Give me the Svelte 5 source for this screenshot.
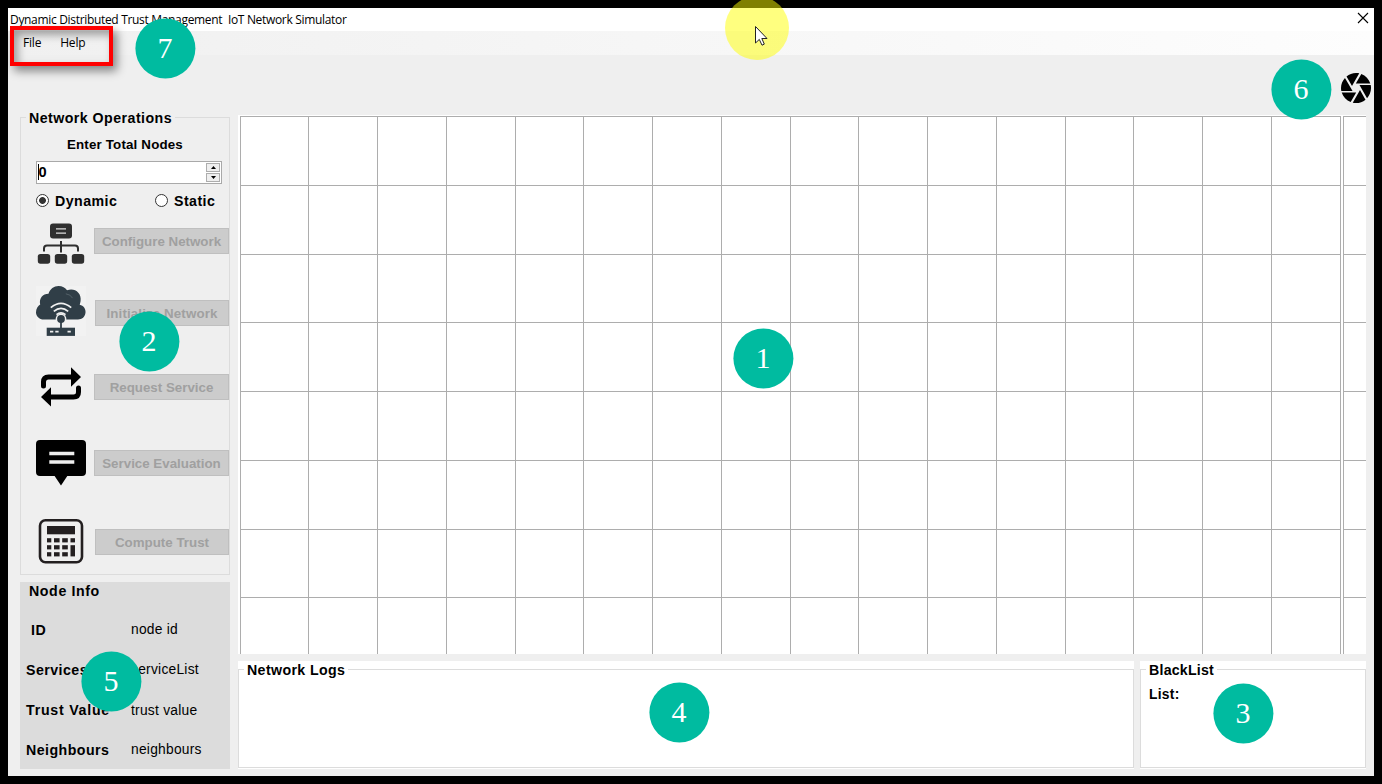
<script>
  const cols = Array.from({ length: 17 }, (_, i) => Math.floor(2 + i * 68.75));
  const rows = Array.from({ length: 8 }, (_, i) => Math.round(1 + i * 68.75));
  const operations = [
    { id: 'configure', label: 'Configure Network' },
    { id: 'initialize', label: 'Initialize Network' },
    { id: 'request', label: 'Request Service' },
    { id: 'evaluate', label: 'Service Evaluation' },
    { id: 'trust', label: 'Compute Trust' }
  ];
  const info = [
    ['ID', 'node id'],
    ['Services', 'serviceList'],
    ['Trust Value', 'trust value'],
    ['Neighbours', 'neighbours']
  ];
  const markers = [
    { n: 1, x: 763, y: 358 },
    { n: 2, x: 149, y: 341 },
    { n: 3, x: 1243, y: 713 },
    { n: 4, x: 679, y: 712 },
    { n: 5, x: 111, y: 681 },
    { n: 6, x: 1301, y: 89 },
    { n: 7, x: 165, y: 48 }
  ];
</script>

<div class="screen">
  <div class="window">
    <header class="title">
      <span>Dynamic Distributed Trust Management&nbsp; IoT Network Simulator</span>
      <svg class="close" width="12" height="12" viewBox="0 0 12 12"><path d="M1 1L11 11M11 1L1 11" stroke="#000" stroke-width="1.1" /></svg>
    </header>
    <nav class="menu"><span>File</span><span>Help</span></nav>
    <div class="tools">
      <svg width="32" height="32" viewBox="1.33 1.33 21.33 21.33">
        <path d="M9.4 10.5l4.77-8.26C13.47 2.09 12.75 2 12 2c-2.4 0-4.6.85-6.32 2.25l3.66 6.35.06-.1zM21.54 9c-.92-2.92-3.15-5.26-6-6.34L11.88 9h9.66zm.26 1h-7.49l.29.5 4.76 8.25C21 16.97 22 14.61 22 12c0-.69-.07-1.35-.2-2zM8.54 12l-3.9-6.75C3.01 7.03 2 9.39 2 12c0 .69.07 1.35.2 2h7.49l-1.15-2zm-6.08 3c.92 2.92 3.15 5.26 6 6.34L12.12 15H2.46zm11.27 0l-3.9 6.76c.7.15 1.42.24 2.17.24 2.4 0 4.6-.85 6.32-2.25l-3.66-6.35-.93 1.6z" />
      </svg>
    </div>
    <main>
      <aside>
        <fieldset class="ops">
          <legend>Network Operations</legend>
          <div class="caption">Enter Total Nodes</div>
          <div class="spinner">
            <span class="value">0</span>
            <span class="steps">
              <i><svg width="5" height="3"><path d="M0 3L2.5 0L5 3z" /></svg></i>
              <i><svg width="5" height="3"><path d="M0 0L2.5 3L5 0z" /></svg></i>
            </span>
          </div>
          <div class="radios">
            <span class="radio on"></span><span class="dyn">Dynamic</span>
            <span class="radio"></span><span class="sta">Static</span>
          </div>
          {#each operations as op}
            <div class="op {op.id}">
              <svg width="50" height="56" viewBox="0 0 50 56">
                {#if op.id === 'configure'}
                  <g fill="#2f2f2f">
                    <rect x="14" y="10.5" width="22" height="15" rx="3" />
                    <rect x="1.8" y="41" width="12.4" height="9.7" rx="2.6" />
                    <rect x="18.8" y="41" width="12.4" height="9.7" rx="2.6" />
                    <rect x="35.8" y="41" width="12.4" height="9.7" rx="2.6" />
                  </g>
                  <path d="M20 15.9h10M20 20.1h10" stroke="#ddd" stroke-width="1.4" />
                  <path d="M25 28v11.5M8 38.5v-3q0-3 3-3h28q3 0 3 3v3" fill="none" stroke="#2f2f2f" stroke-width="2" />
                {:else if op.id === 'initialize'}
                  <rect x="0" y="1" width="50" height="50" fill="#f2f2f2" />
                  <path d="M8 34.5C3 34.5 0 31 0 27.2C0 23.5 2 21 4.2 19.5C2.8 13.5 6.8 8.8 12.5 8.8C14 4 18 1 22.5 1C26.5 1 29.3 2.8 31 5.3C38 2.4 45.8 7.2 44.6 16C44.4 17.5 44 18.7 43.7 19.8C47.4 20.5 50 23.8 49.5 27.8C49 32 46 34.5 42 34.5z" fill="#303e47" />
                  <path d="M29.8 8.8q4.8.5 6.7 4.3" fill="none" stroke="#6c777d" stroke-width=".6" />
                  <g fill="none" stroke="#f0f0f0" stroke-width="1.7">
                    <path d="M14.8 22.7Q25 14 35.2 22.7" /><path d="M17.8 26.4Q25 20.2 32.2 26.4" /><path d="M20.5 29.6Q25 26 29.5 29.6" />
                  </g>
                  <circle cx="25" cy="34" r="5.4" fill="#f0f0f0" />
                  <circle cx="25" cy="34" r="3.9" fill="#303e47" />
                  <path d="M25 36v8" stroke="#303e47" stroke-width="1.8" />
                  <rect x="10.7" y="42.7" width="28.3" height="8.2" fill="#303e47" />
                  <path d="M14 46.7h3.3M19.3 46.7h3.3M31.5 46.7h3.3" stroke="#eee" stroke-width="1.8" />
                {:else if op.id === 'request'}
                  <path d="M7.5 27v-4q0-5 5-5H37M42.5 29v4q0 5-5 5H13" fill="none" stroke="#000" stroke-width="5" stroke-linecap="round" />
                  <path d="M35 8.3L45 18L35 27.8zM15 28.2L5 38L15 47.5z" />
                {:else if op.id === 'evaluate'}
                  <path d="M4 5H46q4 0 4 4v28q0 4-4 4H31.3L25 50.6L18.6 41H4q-4 0-4-4V9q0-4 4-4z" />
                  <path d="M13.3 18.5h25M13.3 27h25" stroke="#eee" stroke-width="3.6" />
                {:else}
                  <rect x="4" y="6.2" width="42" height="42" rx="5.5" fill="none" stroke="#231f20" stroke-width="2.6" />
                  <g fill="#231f20">
                    <rect x="11" y="12" width="28" height="8.3" />
                    {#each [24.2, 31.2, 38.2] as y}
                      <rect x="11" {y} width="4.3" height="4.2" />
                      <rect x="18" {y} width="5.6" height="4.2" />
                      <rect x="26.2" {y} width="5.6" height="4.2" />
                    {/each}
                    <rect x="34.5" y="24.2" width="4.5" height="4.2" />
                    <rect x="34.5" y="31.2" width="4.5" height="11.2" />
                  </g>
                {/if}
              </svg>
              <button disabled>{op.label}</button>
            </div>
          {/each}
        </fieldset>
        <section class="info">
          <h2>Node Info</h2>
          {#each info as [k, v]}
            <div class="pair {k.slice(0, 2).toLowerCase()}"><b>{k}</b><span>{v}</span></div>
          {/each}
        </section>
      </aside>
      <div class="work">
        <svg class="grid" width="1128" height="539" shape-rendering="crispEdges">
          <rect width="1128" height="539" fill="#fff" />
          {#each cols as x}<rect {x} y="1" width="1" height="538" fill="#adadad" />{/each}
          <rect x="1105" y="1" width="1" height="538" fill="#adadad" />
          {#each rows as y}
            <rect x="2" {y} width="1100" height="1" fill="#adadad" />
            <rect x="1105" {y} width="23" height="1" fill="#adadad" />
          {/each}
        </svg>
        <div class="bottom">
          <div class="panel"><fieldset><legend class="logs">Network Logs</legend></fieldset></div>
          <div class="panel"><fieldset><legend class="bl">BlackList</legend><div class="list">List:</div></fieldset></div>
        </div>
      </div>
    </main>
  </div>
  <div class="highlight"></div>
  <div class="halo"></div>
  <svg class="cursor" width="14" height="21" viewBox="0 0 14 21"><path d="M.5.5V17L4.3 13.4L7 19.2L9.3 18.1L6.8 12.5H12z" fill="#fff" stroke="#222" stroke-width="1" /></svg>
  {#each markers as m}
    <div class="marker" style="left:{m.x - 30}px;top:{m.y - 30}px">
      <svg width="61" height="61"><circle cx="30.4" cy="30.5" r="30" fill="#00bba0" /><text x="30" y="40" text-anchor="middle" fill="#fff">{m.n}</text></svg>
    </div>
  {/each}
</div>

<style>
  :global(body) { margin: 0; background: #000; }
  .screen { position: relative; box-sizing: border-box; width: 1382px; height: 784px; padding: 8px; background: #000; overflow: hidden; font: bold 14.2px/18px "Liberation Sans", Arial, sans-serif; color: #000; }
  .window { height: 768px; background: #efefef; }
  .title { display: flex; justify-content: space-between; height: 23px; padding: 0 5px 0 2px; background: #fff; font: 12px/23px "Open Sans", "Noto Sans", sans-serif; letter-spacing: -.32px; white-space: nowrap; }
  .close { margin-top: 4px; }
  .menu { display: flex; gap: 19px; height: 24px; padding-left: 15px; background: linear-gradient(90deg, #f0f0f0, #fdfdfd); font: 12px/24px "Open Sans", "Noto Sans", sans-serif; letter-spacing: -.2px; }
  .tools { display: flex; justify-content: flex-end; align-items: flex-start; box-sizing: border-box; height: 60px; padding: 17px 2px 0 0; }
  main { display: flex; gap: 8px; padding: 0 8px 0 12px; }
  aside { width: 210px; margin-top: -6px; }
  fieldset { box-sizing: border-box; min-width: 0; margin: 0; padding: 0; border: 1px solid #dcdcdc; }
  legend { margin-left: 5px; padding: 0 3px; height: 17px; line-height: 19px; letter-spacing: .46px; white-space: nowrap; }
  .logs { letter-spacing: .37px; }
  .bl { letter-spacing: .22px; }
  .ops { width: 210px; height: 466px; }
  .caption { margin: 10px 0 0 46px; font-size: 13.33px; letter-spacing: .17px; white-space: nowrap; }
  .spinner { display: flex; justify-content: space-between; box-sizing: border-box; width: 186px; height: 23px; margin: 7px 0 0 15px; padding: 1px; border: 1px solid #a9a9a9; background: #fff; }
  .value { height: 16px; border-left: 1px solid #000; line-height: 16px; margin: 1px 0 0; font-size: 14.6px; text-indent: -.5px; }
  .steps { display: grid; gap: 1px; width: 14px; }
  .steps i { display: flex; align-items: center; justify-content: center; border: 1px solid #adadad; background: #efefef; }
  .steps svg { display: block; }
  .radios { display: flex; align-items: center; height: 18px; margin: 8px 0 0 15px; letter-spacing: .45px; }
  .radio { box-sizing: border-box; width: 13px; height: 13px; margin-bottom: 1px; border: 1px solid #333; border-radius: 50%; background: #fff; }
  .on { background: radial-gradient(circle, #333 3px, #fff 3.8px); }
  .dyn { width: 100px; margin-left: 6px; }
  .sta { margin-left: 6px; }
  .dyn, .sta { padding-bottom: 1px; }
  .op { display: flex; align-items: center; justify-content: space-between; height: 56px; margin: 18px 0 0 15px; }
  .configure { margin-top: 3px; }
  .initialize { margin-top: 16px; }
  .evaluate { margin-top: 20px; }
  .trust { margin-top: 23px; }
  button { box-sizing: border-box; width: 135px; height: 26px; margin: 0; padding: 1px 0 0; border: 1px solid #bfbfbf; background: #ccc; color: #a0a0a0; font: inherit; font-size: 13.33px; letter-spacing: 0; white-space: nowrap; }
  .initialize button, .trust button { width: 134px; }
  .initialize button { letter-spacing: .12px; }
  .info { box-sizing: border-box; height: 187px; margin-top: 7px; background: #dcdcdc; display: grid; grid-template-rows: 28px 40px 40px 41px 38px; }
  h2 { margin: 0 0 0 9px; font: inherit; line-height: 19px; letter-spacing: .6px; }
  .pair { display: grid; grid-template-columns: 105px 1fr; align-items: center; padding-left: 6px; letter-spacing: .45px; white-space: nowrap; }
  .pair b { padding-bottom: 1px; }
  .id b { padding-left: 5px; }
  .tr b { letter-spacing: .75px; }
  .pair span { font-weight: normal; font-size: 13.8px; letter-spacing: .25px; }
  .work { width: 1128px; }
  .grid { display: block; }
  .bottom { display: grid; grid-template-columns: 896px 226px; gap: 6px; margin-top: 7px; }
  .panel { height: 108px; background: #fff; }
  .panel fieldset { height: 107px; }
  .list { margin: 7px 0 0 8px; font-size: 13.8px; line-height: 19px; letter-spacing: .3px; }
  .highlight { position: absolute; left: 10px; top: 26px; box-sizing: border-box; width: 103px; height: 40px; border: 4px solid #f00; box-shadow: 4px 5px 9px rgba(0,0,0,.45), inset 4px 5px 9px rgba(0,0,0,.35); }
  .halo { position: absolute; left: 725px; top: -4px; width: 64px; height: 64px; border-radius: 50%; background: rgba(255,255,0,.5); }
  .cursor { position: absolute; left: 755px; top: 26px; }
  .marker { position: absolute; width: 61px; height: 61px; font: 30px "Liberation Serif", serif; }
  .marker svg { display: block; }
</style>
